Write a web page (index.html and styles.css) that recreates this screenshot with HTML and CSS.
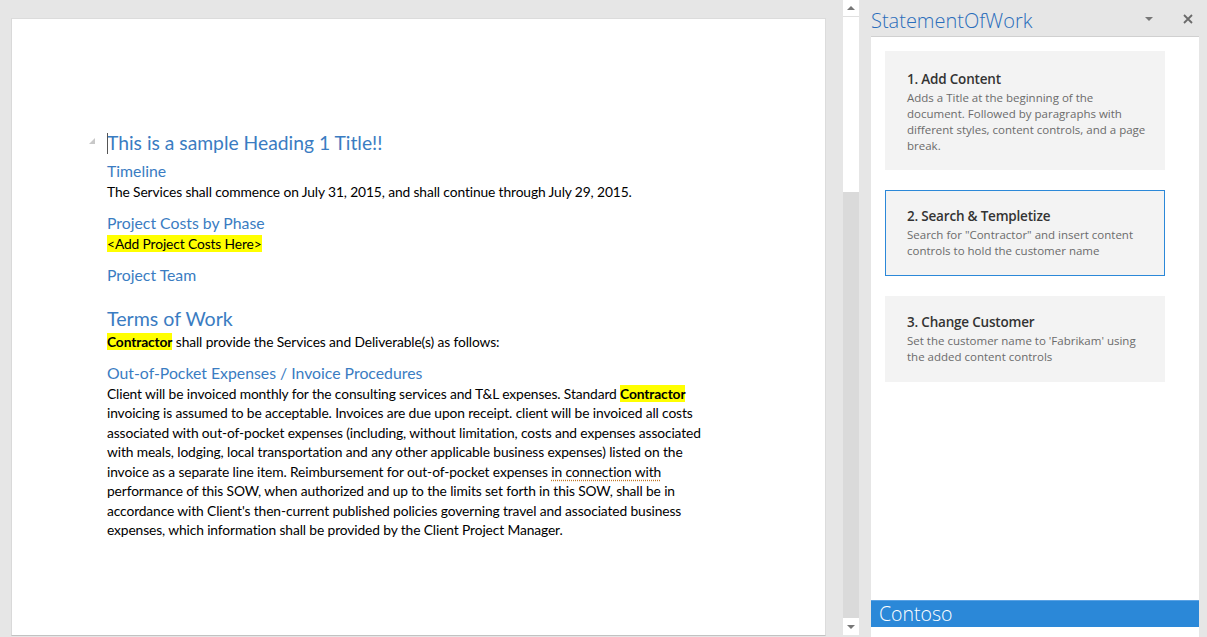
FILE: index.html
```html
<!DOCTYPE html>
<html>
<head>
<meta charset="utf-8">
<link rel="stylesheet" href="styles.css">
</head>
<body>
<div class="app">
  <div class="doc-area">
    <div class="page">
      <div class="content">
        <div class="h1-row">
          <span class="collapse"></span>
          <span class="caret"></span>
          <h1 class="h1">This is a sample Heading 1 Title!!</h1>
        </div>
        <h2 class="h2 first">Timeline</h2>
        <p class="body">The Services shall commence on July 31, 2015, and shall continue through July 29, 2015.</p>
        <h2 class="h2">Project Costs by Phase</h2>
        <p class="body"><span class="hl">&lt;Add Project Costs Here&gt;</span></p>
        <h2 class="h2">Project Team</h2>
        <h2 class="h2 big">Terms of Work</h2>
        <p class="body"><b class="hl">Contractor</b> shall provide the Services and Deliverable(s) as follows:</p>
        <h2 class="h2">Out-of-Pocket Expenses / Invoice Procedures</h2>
        <p class="body para">Client will be invoiced monthly for the consulting services and T&amp;L expenses. Standard <b class="hl">Contractor</b><br>invoicing is assumed to be acceptable. Invoices are due upon receipt. client will be invoiced all costs<br>associated with out-of-pocket expenses (including, without limitation, costs and expenses associated<br>with meals, lodging, local transportation and any other applicable business expenses) listed on the<br>invoice as a separate line item. Reimbursement for out-of-pocket expenses <span class="gram">in connection with</span><br>performance of this SOW, when authorized and up to the limits set forth in this SOW, shall be in<br>accordance with Client's then-current published policies governing travel and associated business<br>expenses, which information shall be provided by the Client Project Manager.</p>
      </div>
    </div>
    <div class="scrollbar">
      <div class="sb-btn"><span class="tri up"></span></div>
      <div class="sb-thumb"></div>
      <div class="sb-track"></div>
      <div class="sb-btn"><span class="tri down"></span></div>
    </div>
  </div>
  <div class="pane">
    <div class="pane-head">
      <span class="pane-title">StatementOfWork</span>
      <span class="pane-menu"><span class="tri down dark"></span></span>
      <span class="pane-close">
        <svg width="10" height="10" viewBox="0 0 10 10"><path d="M1 1L9 9M9 1L1 9" stroke="#6a6a6a" stroke-width="1.8"/></svg>
      </span>
    </div>
    <div class="pane-body">
      <div class="cards">
        <div class="card c1">
          <div class="card-title">1. Add Content</div>
          <div class="card-desc">Adds a Title at the beginning of the document. Followed by paragraphs with different styles, content controls, and a page break.</div>
        </div>
        <div class="card active">
          <div class="card-title">2. Search &amp; Templetize</div>
          <div class="card-desc">Search for "Contractor" and insert content controls to hold the customer name</div>
        </div>
        <div class="card">
          <div class="card-title">3. Change Customer</div>
          <div class="card-desc">Set the customer name to 'Fabrikam' using the added content controls</div>
        </div>
      </div>
      <div class="footer">Contoso</div>
    </div>
  </div>
</div>
</body>
</html>
```

FILE: styles.css
```css
* { box-sizing: border-box; }
html, body { margin: 0; padding: 0; }
body {
  background: #e6e6e6;
  width: 1207px;
  height: 637px;
  overflow: hidden;
}
.app {
  display: flex;
  height: 637px;
}
.doc-area {
  display: flex;
  width: 871px;
  flex: none;
}
.page {
  margin: 18px 0 0 11px;
  width: 815px;
  height: 618px;
  background: #fff;
  border-left: 1px solid #d9d9d9;
  border-top: 1px solid #dcdcdc;
  border-bottom: 1px solid #c2c2c2;
  border-right: 1px solid #dcdcdc;
  flex: none;
}
.content {
  padding: 110px 0 0 95px;
  font-family: Lato, "Liberation Sans", sans-serif;
  color: #000;
}
.h1-row {
  position: relative;
  height: 28px;
  margin-bottom: 3px;
}
.collapse {
  position: absolute;
  left: -18px;
  top: 9px;
  width: 0; height: 0;
  border-left: 6px solid transparent;
  border-bottom: 6px solid #c8c8c8;
}
.caret {
  position: absolute;
  left: 0;
  top: 4px;
  width: 1px;
  height: 21px;
  background: #555;
}
.h1 {
  margin: 0;
  font-weight: 400;
  font-size: 19.3px;
  line-height: 28px;
  color: #3a7cc2;
}
.h2 {
  margin: 10.5px 0 0;
  font-weight: 400;
  font-size: 15.8px;
  line-height: 22px;
  color: #3a7cc2;
}
.h2.first { margin-top: 0; }
.h2.big {
  font-size: 19.6px;
  line-height: 26px;
  margin-top: 19.5px;
}
.body {
  margin: 0;
  font-size: 13.8px;
  letter-spacing: -0.12px;
  line-height: 19.5px;
  white-space: nowrap;
}
.hl { background: #ffff00; }
b.hl { font-weight: 700; }
.gram {
  text-decoration: underline dotted #c0782a;
  text-underline-offset: 3px;
}
.scrollbar {
  margin-left: 17px;
  width: 16px;
  display: flex;
  flex-direction: column;
  height: 637px;
}
.sb-btn {
  height: 17px;
  background: #fff;
  display: flex;
  align-items: center;
  justify-content: center;
  flex: none;
}
.sb-btn:first-child { border-bottom: 1px solid #e0e0e0; }
.sb-btn:last-child { margin-bottom: 2px; }
.sb-thumb {
  height: 175px;
  background: #fff;
  flex: none;
}
.sb-track {
  flex: 1;
  background: #dadada;
}
.tri {
  width: 0; height: 0;
  border-left: 4px solid transparent;
  border-right: 4px solid transparent;
}
.tri.up { border-bottom: 4px solid #777; }
.tri.down { border-top: 4px solid #777; }
.tri.dark { border-top-color: #777; }
.pane {
  width: 336px;
  display: flex;
  flex-direction: column;
  flex: none;
}
.pane-head {
  height: 37px;
  display: flex;
  align-items: center;
  padding-right: 1px;
  border-bottom: 1px solid #d0d0d0;
  margin-right: 8px;
}
.pane-title {
  font-family: "Open Sans", "Noto Sans", sans-serif;
  font-weight: 300;
  font-size: 20px;
  color: #2a6dbb;
  flex: 1;
  margin-top: 4px;
}
.pane-menu {
  width: 12px;
  display: flex;
  justify-content: center;
  margin-right: 28px;
  margin-top: 1px;
}
.pane-close {
  display: flex;
  margin-right: 5px;
  margin-top: 1px;
}
.pane-body {
  flex: 1;
  background: #fff;
  margin-right: 8px;
  display: flex;
  flex-direction: column;
  font-family: "Open Sans", "Noto Sans", sans-serif;
}
.cards {
  flex: 1;
  padding: 14px 0 0 14px;
  display: flex;
  flex-direction: column;
  gap: 20px;
}
.card {
  width: 280px;
  height: 86px;
  background: #f3f3f3;
  padding: 15px 18px 0 21px;
  border: 1px solid #f3f3f3;
}
.card.c1 { height: 119px; padding-top: 17px; }
.card.active { border: 1px solid #2b88d8; }
.card-title {
  font-size: 13.5px;
  font-weight: 600;
  color: #333;
  line-height: 20px;
  letter-spacing: -0.2px;
}
.card-desc {
  font-size: 11.5px;
  color: #6b6b6b;
  line-height: 16px;
  margin-top: 1px;
}
.footer {
  height: 27px;
  margin-bottom: 10px;
  background: #2b88d8;
  border-top: 1px solid #5aa2e4;
  color: #fff;
  font-weight: 300;
  font-size: 19.5px;
  line-height: 26px;
  padding-left: 8px;
}
```
